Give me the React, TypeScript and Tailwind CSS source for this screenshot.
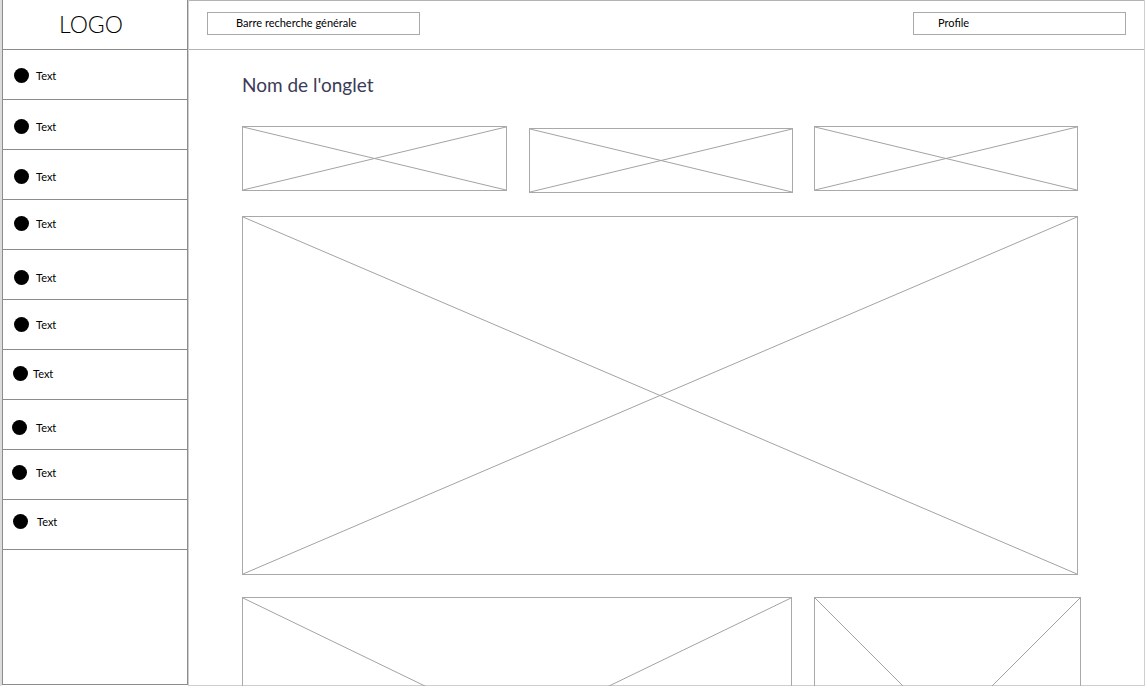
import React from "react";

const items = [
  { pt: "pt-[18px]", pl: "pl-[11px]", gap: "gap-[7px]" },
  { pt: "pt-[19px]", pl: "pl-[11px]", gap: "gap-[7px]" },
  { pt: "pt-[19px]", pl: "pl-[11px]", gap: "gap-[7px]" },
  { pt: "pt-[16px]", pl: "pl-[11px]", gap: "gap-[7px]" },
  { pt: "pt-[20px]", pl: "pl-[11px]", gap: "gap-[7px]" },
  { pt: "pt-[17px]", pl: "pl-[11px]", gap: "gap-[7px]" },
  { pt: "pt-[16px]", pl: "pl-[10px]", gap: "gap-[5px]" },
  { pt: "pt-[20px]", pl: "pl-[9px]", gap: "gap-[9px]" },
  { pt: "pt-[15px]", pl: "pl-[9px]", gap: "gap-[9px]" },
  { pt: "pt-[14px]", pl: "pl-[10px]", gap: "gap-[9px]" },
];

function Placeholder({ className }: { className: string }) {
  return (
    <div className={`relative shrink-0 border border-[#a9a9a9] ${className}`}>
      <svg
        className="absolute inset-0 h-full w-full"
        viewBox="0 0 100 100"
        preserveAspectRatio="none"
      >
        <line x1="0" y1="0" x2="100" y2="100" stroke="#a3a3a3" strokeWidth="1" vectorEffect="non-scaling-stroke" />
        <line x1="100" y1="0" x2="0" y2="100" stroke="#a3a3a3" strokeWidth="1" vectorEffect="non-scaling-stroke" />
      </svg>
    </div>
  );
}

export default function App() {
  return (
    <div
      className="flex h-[686px] w-[1146px] overflow-hidden border-l-2 border-[#dcdcdc] bg-white text-black"
      style={{ fontFamily: 'Lato, "Noto Sans", sans-serif' }}
    >
      {/* sidebar */}
      <aside className="flex h-[685px] w-[186px] shrink-0 flex-col border-x border-b border-[#8c8c8c]">
        <div className="flex h-[50px] items-center justify-center border-b border-[#8c8c8c] pr-[8px] text-[23px] font-light">
          LOGO
        </div>
        {items.map((it, i) => (
          <div
            key={i}
            className={`flex h-[50px] items-start border-b border-[#8c8c8c] ${it.pt} ${it.pl} ${it.gap}`}
          >
            <span className="h-[15px] w-[15px] shrink-0 rounded-full bg-black" />
            <span className="text-[11px] leading-[15px]">Text</span>
          </div>
        ))}
      </aside>

      {/* main */}
      <main className="flex h-[686px] w-[957px] shrink-0 flex-col border-l border-r border-b border-[#cfcfcf]">
        <header className="flex h-[50px] shrink-0 items-center justify-between border-t border-b border-[#b3b3b3] px-[18px] pb-[4px]">
          <div className="flex h-[23px] w-[213px] items-center border border-[#a9a9a9] pl-[28px] text-[11px]">
            Barre recherche générale
          </div>
          <div className="flex h-[23px] w-[213px] items-center border border-[#a9a9a9] pl-[24px] text-[11px]">
            Profile
          </div>
        </header>

        <section className="flex flex-col pl-[53px] pt-[22px]">
          <h1 className="text-[19px] leading-[26px] text-[#3b3b58]">Nom de l'onglet</h1>

          <div className="mt-[28px] flex items-start">
            <Placeholder className="h-[65px] w-[265px]" />
            <Placeholder className="ml-[22px] mt-[2px] h-[65px] w-[264px]" />
            <Placeholder className="ml-[21px] h-[65px] w-[264px]" />
          </div>

          <Placeholder className="mt-[23px] h-[359px] w-[836px]" />

          <div className="mt-[22px] flex items-start gap-[22px]">
            <Placeholder className="h-[267px] w-[550px]" />
            <Placeholder className="h-[267px] w-[267px]" />
          </div>
        </section>
      </main>
    </div>
  );
}
